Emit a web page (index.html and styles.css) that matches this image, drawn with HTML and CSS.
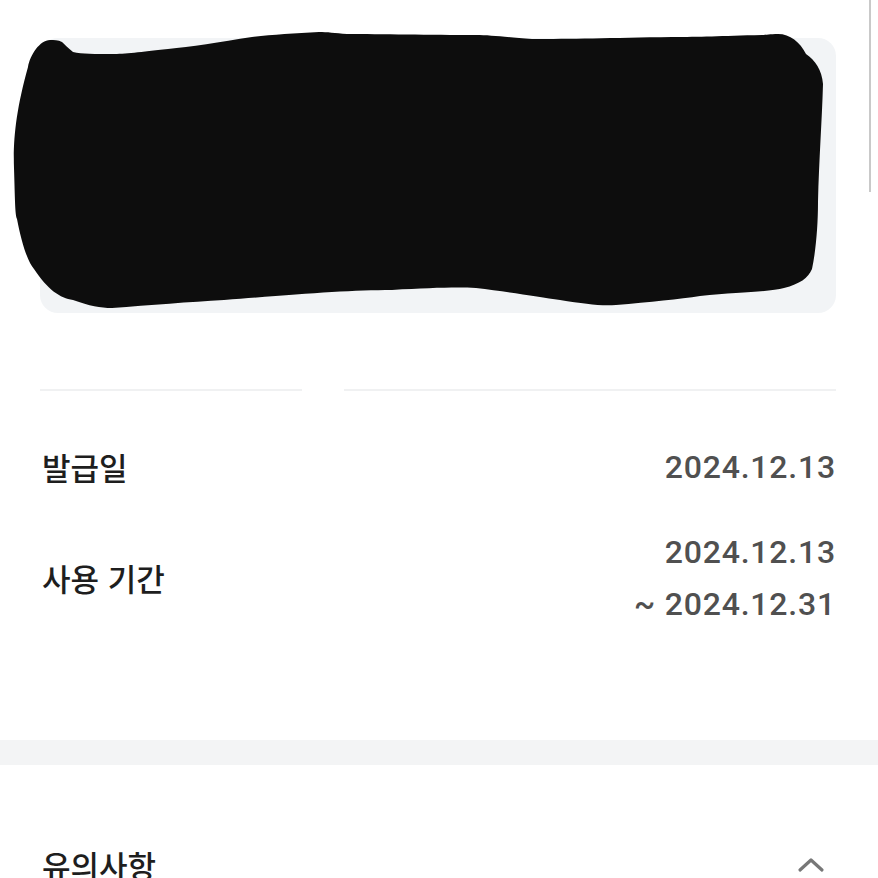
FILE: index.html
```html
<!DOCTYPE html>
<html lang="ko">
<head>
<meta charset="utf-8">
<link rel="stylesheet" href="styles.css">
</head>
<body>
<div class="scrollbar"></div>
<section class="ticket">
  <div class="card">
    <svg class="redact" viewBox="0 0 878 340" width="878" height="340" aria-hidden="true">
      <path fill="#0d0d0d" d="M50 40 C40 40 30 55 28 67 C16 110 13 140 14 168 C15 200 15 215 17 219 C22 245 28 262 34 269 C48 290 60 298 73 300 C90 306 100 308 112 308 C150 305 190 302 224 300 C300 294 350 290 392 290 C430 288 455 287 476 288 C510 292 540 297 560 300 C585 304 600 306 616 305 C650 302 680 299 700 296 C740 292 770 292 784 288 C800 284 808 278 812 269 C816 250 818 225 818 202 C819 160 822 120 823 84 C822 70 815 60 806 54 C800 42 790 34 778 34 C770 34 766 35 762 35 C720 36 700 37 672 37 C610 38 570 39 532 39 C505 37 490 35 476 35 C430 35 380 34 347 34 C335 33 327 32 319 32 C295 33 270 35 252 37 C220 42 190 47 168 49 C140 52 125 54 112 54 C95 54 82 54 73 52 C68 48 64 44 62 42 C58 40 54 40 50 40 Z"/>
    </svg>
  </div>
</section>

<div class="dividers">
  <span class="divider short"></span>
  <span class="divider long"></span>
</div>

<section class="info">
  <div class="row">
    <div class="label">발급일</div>
    <div class="value">2024.12.13</div>
  </div>
  <div class="row">
    <div class="label">사용 기간</div>
    <div class="value">
      <div>2024.12.13</div>
      <div>~ 2024.12.31</div>
    </div>
  </div>
</section>

<div class="band"></div>

<section class="notice">
  <div class="notice-title">유의사항</div>
  <svg class="chevron" width="28" height="16" viewBox="0 0 28 16" aria-hidden="true">
    <path d="M3 13 L14 3 L25 13" fill="none" stroke="#777" stroke-width="3.2" stroke-linecap="round" stroke-linejoin="round"/>
  </svg>
</section>
</body>
</html>
```

FILE: styles.css
```css
html, body {
  margin: 0;
  padding: 0;
  background: #ffffff;
}

body {
  width: 878px;
  height: 878px;
  overflow: hidden;
  position: relative;
  font-family: "Noto Sans CJK KR", "Noto Sans", sans-serif;
}

.scrollbar {
  position: absolute;
  top: 0;
  left: 869px;
  width: 2px;
  height: 192px;
  background: #c9c9c9;
}

.ticket {
  padding: 38px 42px 0 40px;
}

.card {
  position: relative;
  height: 275px;
  background: #f2f4f6;
  border-radius: 18px;
}

.redact {
  position: absolute;
  left: -40px;
  top: -38px;
}

.dividers {
  display: flex;
  gap: 42px;
  padding: 0 42px 0 40px;
  margin-top: 76px;
}

.divider {
  display: block;
  height: 2px;
  background: #f0f1f2;
}

.divider.short {
  width: 262px;
}

.divider.long {
  flex: 1;
}

.info {
  display: flex;
  flex-direction: column;
  gap: 33px;
  padding: 50px 42px 0 42px;
}

.row {
  display: flex;
  justify-content: space-between;
  align-items: center;
}

.label {
  font-size: 31px;
  font-weight: 500;
  color: #1e1e1e;
  line-height: 52px;
}

.value {
  font-family: Roboto, "Liberation Sans", sans-serif;
  font-size: 32px;
  font-weight: 500;
  letter-spacing: 0.8px;
  color: #505050;
  line-height: 52px;
  text-align: right;
}

.band {
  margin-top: 110px;
  height: 25px;
  background: #f3f4f5;
}

.notice {
  display: flex;
  justify-content: space-between;
  align-items: center;
  padding: 76px 53px 0 42px;
}

.notice-title {
  font-size: 31px;
  font-weight: 500;
  color: #1e1e1e;
  line-height: 48px;
}

.chevron {
  display: block;
}
```
